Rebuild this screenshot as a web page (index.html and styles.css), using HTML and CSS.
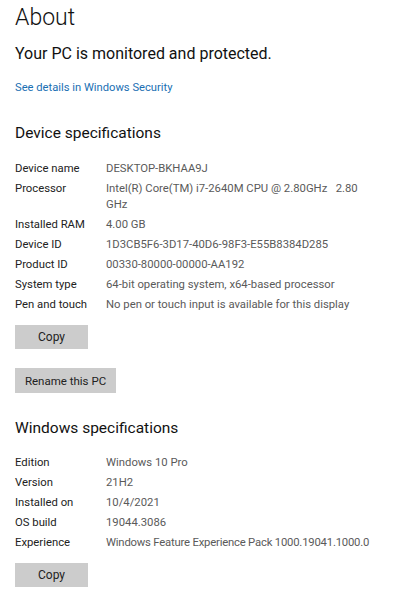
FILE: index.html
```html
<!DOCTYPE html>
<html>
<head>
	<title>About</title>
	<link rel="stylesheet" href="styles.css">
</head>
<body>
	<main class="about">
		<h1 class="page-title">About</h1>
		<p class="status">Your PC is monitored and protected.</p>
		<a class="link" href="#">See details in Windows Security</a>

		<!-- Device specifications -->
		<section class="specs">
			<h2 class="section-title">Device specifications</h2>
			<dl class="spec-list device-list">
				<dt>Device name</dt>
				<dd>DESKTOP-BKHAA9J</dd>
				<dt>Processor</dt>
				<dd class="wrap">Intel(R) Core(TM) i7-2640M CPU @ 2.80GHz &nbsp; 2.80 GHz</dd>
				<dt>Installed RAM</dt>
				<dd>4.00 GB</dd>
				<dt>Device ID</dt>
				<dd>1D3CB5F6-3D17-40D6-98F3-E55B8384D285</dd>
				<dt>Product ID</dt>
				<dd>00330-80000-00000-AA192</dd>
				<dt>System type</dt>
				<dd>64-bit operating system, x64-based processor</dd>
				<dt>Pen and touch</dt>
				<dd>No pen or touch input is available for this display</dd>
			</dl>
			<button class="btn btn-copy">Copy</button>
			<button class="btn btn-rename">Rename this PC</button>
		</section>

		<!-- Windows specifications -->
		<section class="specs">
			<h2 class="section-title windows-title">Windows specifications</h2>
			<dl class="spec-list">
				<dt>Edition</dt>
				<dd>Windows 10 Pro</dd>
				<dt>Version</dt>
				<dd>21H2</dd>
				<dt>Installed on</dt>
				<dd>10/4/2021</dd>
				<dt>OS build</dt>
				<dd>19044.3086</dd>
				<dt>Experience</dt>
				<dd class="tight">Windows Feature Experience Pack 1000.19041.1000.0</dd>
			</dl>
			<button class="btn btn-copy btn-last">Copy</button>
		</section>
	</main>
</body>
</html>
```

FILE: styles.css
```css
/* General styles */
body {
	font-family: Roboto, "Noto Sans", sans-serif;
	margin: 0;
	padding: 0;
	background-color: #fff;
	color: #1a1a1a;
}

.about {
	padding: 0 15px;
}

.page-title {
	font-size: 23px;
	font-weight: 300;
	line-height: 30px;
	margin: 3px 0 0;
	color: #111;
}

.status {
	font-size: 16px;
	line-height: 22px;
	margin: 10px 0 0;
	color: #111;
}

.link {
	display: block;
	font-size: 11.2px;
	line-height: 16px;
	margin-top: 15px;
	color: #1a6fb3;
	text-decoration: none;
}

/* Spec sections */
.section-title {
	font-size: 15.5px;
	font-weight: 400;
	line-height: 22px;
	margin: 26px 0 0;
	color: #111;
}

.windows-title {
	margin-top: 24px;
}

.spec-list {
	display: grid;
	grid-template-columns: 91px auto;
	row-gap: 4px;
	margin: 16px 0 0;
	font-size: 11.3px;
	line-height: 16px;
}

.device-list {
	margin-top: 17px;
}

.spec-list dt {
	color: #222;
}

.spec-list dd {
	margin: 0;
	color: #5a5a5a;
}

.spec-list .wrap {
	max-width: 255px;
}

.spec-list .tight {
	letter-spacing: -0.2px;
}

/* Buttons */
.btn {
	display: block;
	font-family: inherit;
	font-size: 12px;
	color: #222;
	background-color: #cccccc;
	border: none;
	border-radius: 0;
	padding: 0;
	height: 24px;
}

.btn-copy {
	width: 73px;
	margin-top: 12px;
}

.btn-rename {
	width: 101px;
	height: 25px;
	margin-top: 19px;
	font-size: 11.5px;
}

.btn-last {
	margin-top: 12px;
}
```
